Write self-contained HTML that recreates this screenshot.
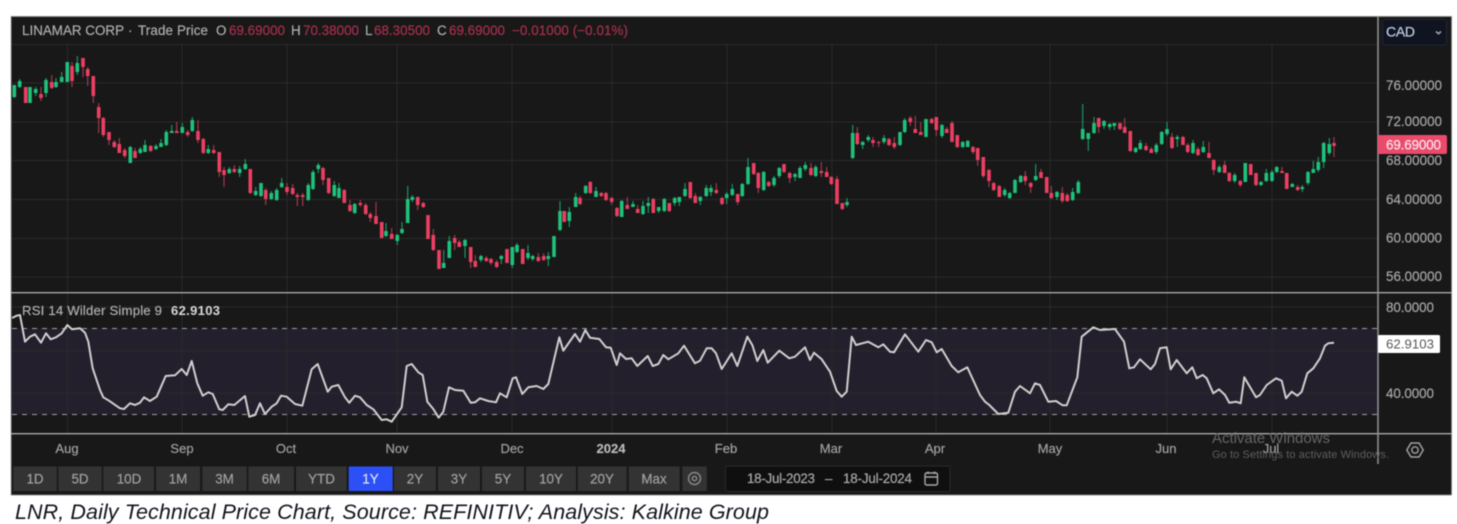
<!DOCTYPE html>
<html><head><meta charset="utf-8"><title>LNR Chart</title>
<style>
html,body{margin:0;padding:0;background:#fff;width:1457px;height:524px;overflow:hidden}
svg{display:block;filter:blur(.5px)}
text{font-family:"Liberation Sans",sans-serif}
</style></head><body>
<svg width="1457" height="524" viewBox="0 0 1457 524" xmlns="http://www.w3.org/2000/svg">
<rect width="1457" height="524" fill="#fff"/>
<rect x="11" y="16" width="1440.5" height="479" fill="#181818"/>
<path d="M11 16.5H1451.5M11 495H1451.5" stroke="#888" stroke-width="1" fill="none"/>
<path d="M1451.5 16V495M11.2 16V495" stroke="#777" stroke-width=".8" fill="none"/>
<!-- RSI band -->
<rect x="11.5" y="328.5" width="1366" height="86" fill="#241f2c"/>
<!-- grid -->
<path d="M67.5 45V292M182 45V292M287 45V292M397 45V292M512 45V292M612 45V292M727 45V292M832 45V292M936 45V292M1050 45V292M1167 45V292M1272 45V292M67.5 293V433M182 293V433M287 293V433M397 293V433M512 293V433M612 293V433M727 293V433M832 293V433M936 293V433M1050 293V433M1167 293V433M1272 293V433" stroke="#2a2a2a" stroke-width="1" fill="none"/>
<path d="M12 44.5H1378M12 83H1378M12 122H1378M12 160.5H1378M12 199.5H1378M12 238.5H1378M12 277H1378M12 307H1378M12 351H1378M12 393H1378" stroke="#2a2a2a" stroke-width="1" fill="none"/>
<path d="M12 328.5H1378M12 414.5H1378" stroke="#a0a0a0" stroke-width="1" stroke-dasharray="5 5" fill="none"/>
<!-- candles green wicks -->
<path fill="none" stroke="#1a9e68" stroke-width="1.1" d="M14.3 85V98M19.7 79V88M30 87V103M35.7 87V96M46 78V97M56 78V88M61.7 72V82M67.3 62V82M77.3 56V75M130.3 146V163M140.3 147V154M145 140V152M156 144V150M161 139V147M166.3 130V146M171.7 125V133M182.3 123V133M192.3 117V132M208.3 145V154M229.3 167V174M239.7 166V177M245.3 159V170M255.7 187V196M261 183V197M271.3 191V200M276.7 188V201M281.7 178V188M308.3 183V201M313 170V190M318.3 163V173M334.3 181V197M339 183V198M354.7 203V214M386 223V237M397.3 234V245M402 222V234M407.7 186V223M412.3 195V202M443.7 250V268M449.3 236V258M465 239V258M481 255V262M501.3 255V264M512.3 247V268M517 243V253M528 245V260M532.7 255V261M548.3 252V266M554 236V257M560 201V231M569.3 207V227M575.7 193V207M585.7 185V194M596 187V197M621.7 200V217M633 201V207M643 201V215M648.3 197V213M658.7 207V213M664.3 198V212M674.7 197V206M679.3 197V206M685 183V197M700.3 196V205M706.3 185V197M711 185V196M726.7 192V204M732.3 184V196M742.3 183V197M748 158V185M763.7 171V191M774 176V187M779.3 167V178M795 173V181M800 166V178M805.3 162V171M815.7 165V177M847 198V207M852.7 125V159M862.7 141V149M868.3 135V142M884 135V144M900 132V146M904.7 118V133M926 119V137M942 124V138M962.7 141V148M967.7 140V147M1004.7 188V197M1009.7 192V199M1015 179V193M1020.7 175V183M1035.7 164V181M1057 191V200M1072.7 188V201M1078.3 180V194M1082.7 104V140M1088.3 133V151M1094 117V134M1104 120V129M1109.7 123V130M1114.3 123V130M1135.7 147V153M1140.3 140V150M1156.3 143V154M1161.7 131V145M1167 122V136M1177.3 135V147M1193 140V154M1203.3 141V153M1219.3 165V173M1234.7 173V183M1245.3 163V182M1261 181V186M1266.3 169V182M1272 170V182M1276.7 166V173M1292.3 183V187M1302.3 185V192M1308 171V185M1313.3 161V173M1318.3 157V172M1323.7 142V168M1329.3 138V155"/>
<!-- candles green bodies -->
<path fill="none" stroke="#1fc27c" stroke-width="3.6" d="M14.3 85V97M19.7 81V87M30 87V103M35.7 89V93M46 80V93M56 82V87M61.7 77V82M67.3 62V82M77.3 63V72M130.3 147V163M140.3 149V153M145 145V152M156 146V149M161 143V147M166.3 132V145M171.7 131V133M182.3 127V133M192.3 120V131M208.3 149V153M229.3 169V173M239.7 169V173M245.3 164V169M255.7 191V195M261 183V196M271.3 193V199M276.7 190V200M281.7 183V187M308.3 185V200M313 172V189M318.3 165V169M334.3 185V196M339 188V198M354.7 204V213M386 231V236M397.3 235V241M402 229V233M407.7 199V223M412.3 197V200M443.7 263V268M449.3 241V258M465 240V246M481 256V260M501.3 256V259M512.3 247V265M517 245V252M528 253V258M532.7 256V259M548.3 256V259M554 236V257M560 211V230M569.3 212V221M575.7 197V207M585.7 186V193M596 191V197M621.7 201V217M633 204V207M643 206V214M648.3 203V206M658.7 207V211M664.3 199V211M674.7 198V203M679.3 197V202M685 189V196M700.3 197V201M706.3 188V196M711 188V192M726.7 194V198M732.3 189V195M742.3 184V196M748 167V184M763.7 172V190M774 178V185M779.3 168V176M795 174V177M800 168V178M805.3 165V169M815.7 167V176M847 202V205M852.7 133V158M862.7 142V145M868.3 137V140M884 138V142M900 132V145M904.7 120V132M926 119V137M942 125V136M962.7 142V147M967.7 141V147M1004.7 190V195M1009.7 193V198M1015 180V193M1020.7 176V182M1035.7 176V180M1057 192V197M1072.7 192V200M1078.3 182V193M1082.7 129V139M1088.3 133V139M1094 123V133M1104 121V126M1109.7 124V127M1114.3 123V126M1135.7 148V152M1140.3 143V149M1156.3 145V152M1161.7 132V144M1167 129V134M1177.3 137V139M1193 143V153M1203.3 147V152M1219.3 167V172M1234.7 175V181M1245.3 163V182M1261 182V185M1266.3 173V181M1272 172V181M1276.7 167V172M1292.3 184V187M1302.3 187V189M1308 172V183M1313.3 169V173M1318.3 162V170M1323.7 143V162M1329.3 144V153"/>
<!-- candles red wicks -->
<path fill="none" stroke="#a83a50" stroke-width="1.1" d="M25.7 87V103M41 87V101M51.7 75V89M72 62V87M83 58V77M87.7 67V86M93.3 76V103M98.7 103V133M103.3 117V137M109 132V145M114.3 140V148M119.3 138V153M124.7 148V158M135 148V158M150.7 145V152M176.7 122V133M187.7 130V137M198 120V143M203.3 138V154M213.7 145V154M219.3 152V177M224 167V187M234.3 165V173M250.3 169V194M265.7 188V205M287 183V195M292.7 184V195M297.3 193V206M302.7 193V206M323 167V185M328.7 178V194M344.3 189V203M350 200V212M360.3 200V207M365.7 203V215M370.3 212V222M376 202V224M381.7 222V238M391.7 228V239M417.7 197V210M423.3 202V208M428 215V239M433.3 229V251M439 250V269M454.7 235V250M459.3 240V247M470.7 247V268M475.3 255V267M486.3 256V262M491 258V265M496.7 260V268M507 249V263M522.7 249V264M538.3 253V262M543.7 253V261M564.3 211V222M580 196V205M590.3 181V194M601.3 192V197M606 192V201M611.7 197V205M617 207V217M627.3 197V209M637.7 205V213M653.3 198V213M669.3 203V212M690.3 182V199M695.3 193V203M716.3 183V194M722 197V205M737.7 194V205M753.7 163V175M758.3 172V193M768.7 181V187M784 164V173M789.7 172V183M811 163V176M821.3 162V177M826.7 167V177M831.3 176V185M837 176V204M842.3 203V210M857.3 127V145M873 137V147M878.7 141V147M889 138V146M894.3 137V149M910.3 116V126M915.3 116V133M920.7 122V135M931.7 118V124M936.3 117V136M946.7 127V133M952 121V142M957.3 135V148M973 146V154M977.7 148V166M983.3 157V178M989 169V187M993.7 182V191M999.3 185V197M1025.3 171V185M1030.7 182V193M1041 169V178M1046.7 177V193M1051.3 186V199M1062.3 187V203M1067.3 193V202M1098.7 118V133M1120 123V130M1124.7 118V133M1130.3 131V152M1146 143V151M1151.3 147V153M1172 133V149M1183 136V145M1187.7 143V153M1198 147V156M1209 142V158M1213.7 159V175M1224.7 161V173M1229.3 172V182M1240.3 180V187M1250.7 164V175M1256 173V186M1282 167V173M1286.7 173V189M1297.7 185V191M1334 137V157"/>
<!-- candles red bodies -->
<path fill="none" stroke="#ec3f62" stroke-width="3.6" d="M25.7 87V103M41 94V98M51.7 82V88M72 66V81M83 58V67M87.7 69V76M93.3 76V96M98.7 107V118M103.3 118V135M109 132V140M114.3 142V147M119.3 144V153M124.7 150V156M135 151V158M150.7 146V151M176.7 131V133M187.7 132V135M198 131V140M203.3 139V153M213.7 150V153M219.3 152V172M224 170V175M234.3 169V172M250.3 169V193M265.7 190V199M287 187V192M292.7 188V194M297.3 195V197M302.7 195V197M323 168V180M328.7 178V193M344.3 190V203M350 205V211M360.3 203V205M365.7 205V214M370.3 214V218M376 216V224M381.7 222V238M391.7 234V239M417.7 197V205M423.3 203V207M428 215V239M433.3 235V250M439 250V269M454.7 238V243M459.3 242V247M470.7 247V262M475.3 261V267M486.3 258V261M491 259V263M496.7 262V267M507 249V263M522.7 249V264M538.3 257V261M543.7 256V260M564.3 211V222M580 198V204M590.3 182V193M601.3 193V196M606 193V200M611.7 198V202M617 208V216M627.3 205V209M637.7 209V213M653.3 199V213M669.3 203V211M690.3 182V198M695.3 196V203M716.3 190V193M722 198V204M737.7 194V202M753.7 163V174M758.3 173V188M768.7 182V186M784 164V172M789.7 173V178M811 168V175M821.3 171V173M826.7 172V177M831.3 177V184M837 179V204M842.3 203V209M857.3 133V144M873 140V143M878.7 142V143M889 139V145M894.3 143V147M910.3 118V122M915.3 129V133M920.7 132V135M931.7 119V123M936.3 117V130M946.7 129V133M952 123V142M957.3 135V147M973 147V152M977.7 148V160M983.3 157V176M989 170V181M993.7 183V190M999.3 186V197M1025.3 176V181M1030.7 183V187M1041 172V178M1046.7 177V193M1051.3 193V198M1062.3 193V201M1067.3 195V201M1098.7 118V127M1120 123V129M1124.7 127V133M1130.3 131V151M1146 146V150M1151.3 149V153M1172 137V148M1183 137V145M1187.7 145V152M1198 149V155M1209 153V158M1213.7 160V170M1224.7 165V173M1229.3 173V181M1240.3 181V185M1250.7 164V175M1256 173V185M1282 171V173M1286.7 173V189M1297.7 187V190M1334 143V146"/>
<!-- RSI line -->
<polyline fill="none" stroke="#cfcfcf" stroke-width="2" stroke-linejoin="round" points="12,318 16.7,315.7 20,315 25,341.7 30,336.7 35,334.3 41,342.7 46,333.3 50.7,339.3 56,337.3 61.7,333.3 67.3,325 72,329.3 80,328.3 85,332.7 88.3,341.7 92.7,368.3 100,390 103.3,397.3 109,400.7 120,408.3 124,409 130,403.3 135,405 140,402.7 144,397.3 150,401 156.7,396.7 165.7,376 175,375.3 181.7,369 186.7,375 191.7,361 197.3,383.3 202.7,395.7 208.3,392.3 212.7,394 219.3,409.3 222.7,410 228.3,404.3 234.3,405 245,396 249.3,416.7 255,415 260,403.3 265,414 271.7,406.7 276.7,403.3 281,395.7 286.7,396.7 295,404 302.3,405.7 311.7,369.3 317.7,364 327.7,391.7 331.7,386.7 338.3,385 345,397.3 349.3,402.7 355,395.7 360,397.3 366.7,405 373.3,409.3 381.7,420 386.7,419.3 391.7,421.7 401.7,407.3 406.7,366 411.7,364 418.3,372.3 422.7,375 427.3,401.7 433.3,409 438.7,417.7 443.3,411.7 449,387.3 455,390 463.3,390.7 470.7,402.7 475,402.3 480,398.3 488.3,401 496,402.3 500,393.3 506.7,397.3 512.7,378.3 516,377.3 522.3,394 528.3,387.3 536.7,386 543.3,389 548.3,384 559.3,337.3 563.3,350.7 575,334 580,341.7 585.3,330 590,337.7 599.3,339 606,347.3 610.7,347.7 616.7,365 620,353.3 626,359 631.7,358.3 637.3,366 647.7,356 652.7,366 658.3,364 663.3,355 668.3,359.3 678.3,353.3 684,345.7 695,363.3 700,360.7 706.7,348.3 711.7,348.3 716,353.3 721.7,369 731.7,353.3 737.3,366 747.3,336.7 752.3,345 757.3,361 763.3,350 767.7,362.7 779.3,350.7 789.3,358.3 795,356.7 805,347.3 810,360 814,352.7 821.7,359.3 830,371.7 836.7,391 841.7,396.7 846.7,391.7 851.7,336.7 856,345 868.3,341.7 878.3,347.3 883.3,344.3 890,351.7 894,352.3 905,334.3 918.3,351.7 926,340 931.7,342.3 936.7,352.3 941.7,349 951.7,366 958.3,372.3 967.3,367.3 980,395 985,401.7 989.3,405 998.3,414 1008.3,412.7 1015,391.7 1020,386 1030,393.3 1035,383.3 1040,385 1048.3,401.7 1056,401 1062.7,405.3 1066.7,405.3 1077.3,377.3 1081.7,336.7 1093.3,327.3 1100,330 1115,329 1124,341.7 1129.3,368.3 1134,367.3 1140,359.3 1150.7,369.3 1155,364 1160,348.3 1166.7,347.3 1170.7,369.3 1176.7,360 1186.7,373.3 1192.3,367.3 1196.7,378.3 1202.7,375 1206.7,378.3 1213.3,393.3 1219,389.3 1225,395 1229.3,402.7 1236,401.7 1240.7,403.3 1244.3,377.3 1256,397.3 1260,395 1266.7,385 1276,378.3 1281.7,380.7 1286,398.3 1291.7,391.7 1297.3,395.7 1301.7,391.7 1307.3,373.3 1313.3,368.3 1320,358.3 1325,345.7 1328.3,343.3 1334,342.7"/>
<!-- dividers -->
<path d="M11 292.7H1451.5M11 433.7H1451.5" stroke="#a8a8a8" stroke-width="1.3" fill="none"/>
<path d="M1378 16V464" stroke="#8f8f8f" stroke-width="1.6" fill="none"/>
<!-- header -->
<g font-size="13.4" fill="#adadad" stroke="#adadad" stroke-width=".2">
<text x="22" y="35" textLength="102">LINAMAR CORP</text>
<text x="128" y="35">·</text>
<text x="138" y="35" textLength="70">Trade Price</text>
<text x="216" y="35">O</text><text x="229" y="35" fill="#a5304c" stroke="#a5304c" textLength="56">69.69000</text>
<text x="291" y="35">H</text><text x="303" y="35" fill="#a5304c" stroke="#a5304c" textLength="56">70.38000</text>
<text x="365" y="35">L</text><text x="374" y="35" fill="#a5304c" stroke="#a5304c" textLength="56">68.30500</text>
<text x="437" y="35">C</text><text x="449" y="35" fill="#a5304c" stroke="#a5304c" textLength="56">69.69000</text>
<text x="512" y="35" fill="#a5304c" stroke="#a5304c" textLength="116">−0.01000 (−0.01%)</text>
</g>
<!-- CAD -->
<rect x="1382.5" y="19.5" width="64" height="25.5" rx="3" fill="#0f1420" stroke="#1f2636"/>
<text x="1386" y="36.500" font-size="14" fill="#bccbdf" stroke="#bccbdf" stroke-width=".25" textLength="29">CAD</text>
<path d="M1436 31.5l2.5 2.2 2.5-2.2" fill="none" stroke="#a0a8b4" stroke-width="1.5"/>
<!-- price axis -->
<g font-size="13.400" fill="#a6a6a6" stroke="#a6a6a6" stroke-width=".2">
<text x="1386" y="90" textLength="56">76.00000</text>
<text x="1386" y="126" textLength="56">72.00000</text>
<text x="1386" y="165" textLength="56">68.00000</text>
<text x="1386" y="204" textLength="56">64.00000</text>
<text x="1386" y="242.500" textLength="56">60.00000</text>
<text x="1386" y="281" textLength="56">56.00000</text>
<text x="1386" y="312" textLength="48">80.0000</text>
<text x="1386" y="398" textLength="48">40.0000</text>
</g>
<path d="M1378 135H1445a2 2 0 0 1 2 2V152a2 2 0 0 1-2 2H1378Z" fill="#ec4a6b"/>
<text x="1386" y="149.500" font-size="13.400" fill="#f6e6ea" stroke="#f6e6ea" stroke-width=".2" textLength="55">69.69000</text>
<rect x="1378" y="335" width="62" height="18" rx="1.500" fill="#fff"/>
<text x="1386" y="348.500" font-size="13.200" fill="#555" textLength="48">62.9103</text>
<!-- RSI label -->
<text x="22" y="315" font-size="13.200" fill="#b0b0b0" stroke="#b0b0b0" stroke-width=".2" textLength="140">RSI 14 Wilder Simple 9</text>
<text x="171" y="315" font-size="13" font-weight="bold" fill="#d8d8d8" textLength="49">62.9103</text>
<!-- time axis -->
<g font-size="13" fill="#a0a0a0" stroke="#a0a0a0" stroke-width=".2" text-anchor="middle">
<text x="67" y="453">Aug</text><text x="182" y="453">Sep</text><text x="286" y="453">Oct</text><text x="397" y="453">Nov</text><text x="512" y="453">Dec</text>
<text x="611" y="453" font-weight="bold" fill="#bcbcbc">2024</text>
<text x="726" y="453">Feb</text><text x="831" y="453">Mar</text><text x="935" y="453">Apr</text><text x="1050" y="453">May</text><text x="1166" y="453">Jun</text><text x="1271" y="453">Jul</text>
</g>
<!-- buttons -->
<g fill="#333">
<rect x="13.300" y="466.500" width="43.500" height="24.500"/><rect x="58.300" y="466.500" width="43.500" height="24.500"/><rect x="103.300" y="466.500" width="50.700" height="24.500"/><rect x="156" y="466.500" width="44" height="24.500"/><rect x="202.300" y="466.500" width="44.500" height="24.500"/><rect x="248.300" y="466.500" width="45.700" height="24.500"/><rect x="296" y="466.500" width="50.700" height="24.500"/><rect x="394" y="466.500" width="42" height="24.500"/><rect x="438" y="466.500" width="42" height="24.500"/><rect x="482" y="466.500" width="42" height="24.500"/><rect x="526" y="466.500" width="50" height="24.500"/><rect x="577.700" y="466.500" width="49" height="24.500"/><rect x="628.700" y="466.500" width="51" height="24.500"/><rect x="682.300" y="466.500" width="24.500" height="24.500"/>
</g>
<rect x="348.700" y="466.500" width="44" height="24.500" fill="#2c50f6"/>
<g font-size="13.400" fill="#a0a0a0" stroke="#a0a0a0" stroke-width=".2" text-anchor="middle">
<text x="35" y="483.500">1D</text><text x="80" y="483.500">5D</text><text x="129" y="483.500">10D</text><text x="178" y="483.500">1M</text><text x="224.500" y="483.500">3M</text><text x="271" y="483.500">6M</text><text x="321.500" y="483.500">YTD</text>
<text x="370.500" y="483.500" fill="#dfe4f8" stroke="#dfe4f8">1Y</text>
<text x="415" y="483.500">2Y</text><text x="459" y="483.500">3Y</text><text x="503" y="483.500">5Y</text><text x="551" y="483.500">10Y</text><text x="602" y="483.500">20Y</text><text x="654" y="483.500">Max</text>
</g>
<circle cx="694.500" cy="478.500" r="6" fill="none" stroke="#8a8a8a" stroke-width="1.400"/>
<circle cx="694.500" cy="478.500" r="2.200" fill="none" stroke="#8a8a8a" stroke-width="1.400"/>
<!-- date range -->
<rect x="725.500" y="466" width="224.500" height="25.500" rx="2" fill="#0f0f0f" stroke="#2a2a2a"/>
<g font-size="13.400" fill="#a8a8a8" stroke="#a8a8a8" stroke-width=".2">
<text x="747" y="483" textLength="68">18-Jul-2023</text>
<text x="825" y="483">–</text>
<text x="843" y="483" textLength="69">18-Jul-2024</text>
</g>
<g fill="none" stroke="#a8a8a8" stroke-width="1.400">
<rect x="925" y="473" width="12.500" height="12" rx="1.500"/><path d="M925 477H937.500M928 471.500V474M934.500 471.500V474"/>
</g>
<!-- gear -->
<path d="M1406.800 450L1411 443H1419L1423.200 450L1419 457H1411Z" fill="none" stroke="#a0a0a0" stroke-width="1.500"/>
<circle cx="1415" cy="450" r="3.200" fill="none" stroke="#a0a0a0" stroke-width="1.400"/>
<!-- activate windows -->
<text x="1212" y="443" font-size="15" fill="#666" textLength="118">Activate Windows</text>
<text x="1212" y="458" font-size="11" fill="#5e5e5e" textLength="177">Go to Settings to activate Windows.</text>
<!-- caption -->
<text x="15" y="519" font-size="21.500" font-style="italic" fill="#10131c" textLength="754">LNR, Daily Technical Price Chart, Source: REFINITIV; Analysis: Kalkine Group</text>
</svg>
</body></html>
